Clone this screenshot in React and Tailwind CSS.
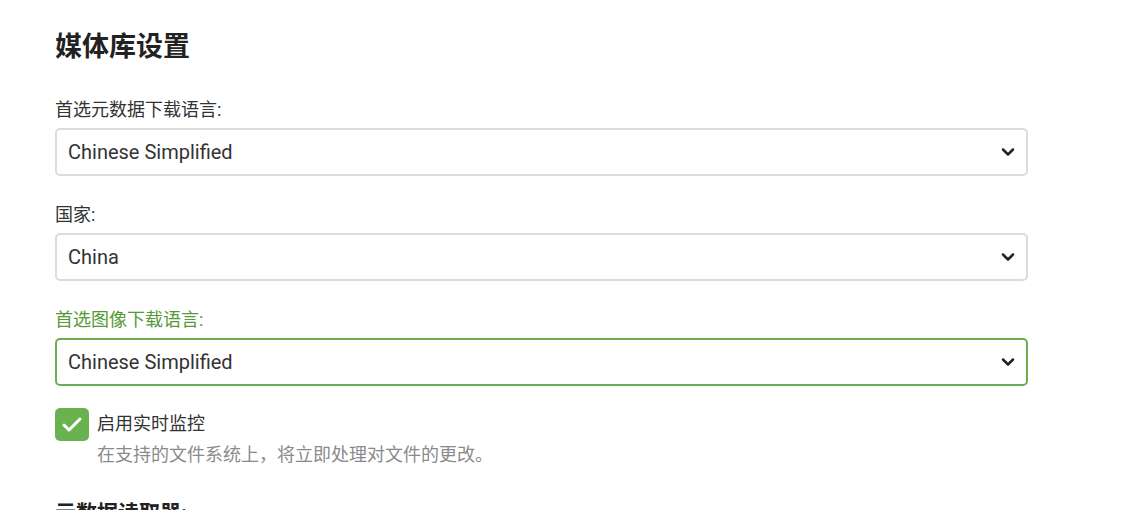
import { ChevronDown, Check } from "lucide-react";

const fontStack = "font-['Roboto','Noto_Sans_CJK_SC',sans-serif]";

const SelectField = ({ label, value, focused = false }) => (
    <div className="mb-[27px]">
        <label
            className={`mb-[6px] block h-6 text-[18px] leading-6 ${focused ? "text-[#559a35]" : "text-[#333]"}`}
        >
            {label}
        </label>
        <div
            className={`flex h-[48px] items-center justify-between rounded-[5px] border-2 bg-white pl-[11px] pr-[8px] ${focused ? "border-[#6aad50]" : "border-[#dcdcdc]"}`}
        >
            <span className="text-[20px] text-[#333]">{value}</span>
            <ChevronDown size={20} strokeWidth={3} className="text-[#222]" />
        </div>
    </div>
);

export default function App() {
    return (
        <div className={`min-h-screen bg-white ${fontStack}`}>
            <div className="w-[973px] pl-[55px] pt-[31px] box-content">
                <h1 className="mb-[35px] h-8 text-[27px] font-bold leading-8 text-[#222]">
                    媒体库设置
                </h1>
                <SelectField label="首选元数据下载语言:" value="Chinese Simplified" />
                <SelectField label="国家:" value="China" />
                <SelectField
                    label="首选图像下载语言:"
                    value="Chinese Simplified"
                    focused
                />
                <div className="-mt-[5px] flex gap-[8px]">
                    <div className="flex h-[33px] w-[34px] shrink-0 items-center justify-center rounded-[5px] bg-[#6ab150]">
                        <Check size={24} strokeWidth={3} className="text-white" />
                    </div>
                    <div className="pt-[4px]">
                        <div className="text-[18px] leading-6 text-[#333]">启用实时监控</div>
                        <div className="mt-[7px] text-[18px] leading-6 text-[#8a8a8a]">
                            在支持的文件系统上，将立即处理对文件的更改。
                        </div>
                    </div>
                </div>
                <h2 className="mt-[32px] text-[21px] font-bold leading-7 text-[#222]">
                    元数据读取器:
                </h2>
            </div>
        </div>
    );
}
